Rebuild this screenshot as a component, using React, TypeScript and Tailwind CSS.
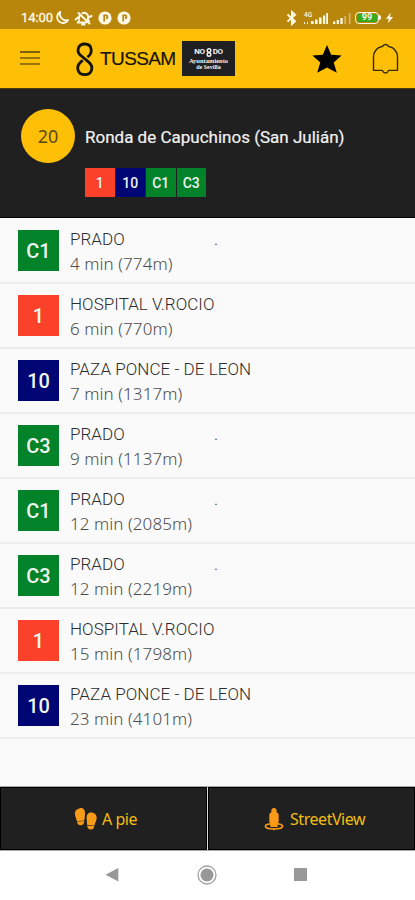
import React from 'react';

type Line = '1' | '10' | 'C1' | 'C3';

interface Arrival {
  line: Line;
  destination: string;
  time: string;
  distance: string;
}

const LINE_COLORS: Record<Line, string> = {
  '1': 'bg-[#fb4129]',
  '10': 'bg-[#000574]',
  C1: 'bg-[#038329]',
  C3: 'bg-[#038329]',
};

const STOP_LINES: Line[] = ['1', '10', 'C1', 'C3'];

const ARRIVALS: Arrival[] = [
  { line: 'C1', destination: 'PRADO', time: '4 min', distance: '774m' },
  { line: '1', destination: 'HOSPITAL V.ROCIO', time: '6 min', distance: '770m' },
  { line: '10', destination: 'PAZA PONCE - DE LEON', time: '7 min', distance: '1317m' },
  { line: 'C3', destination: 'PRADO', time: '9 min', distance: '1137m' },
  { line: 'C1', destination: 'PRADO', time: '12 min', distance: '2085m' },
  { line: 'C3', destination: 'PRADO', time: '12 min', distance: '2219m' },
  { line: '1', destination: 'HOSPITAL V.ROCIO', time: '15 min', distance: '1798m' },
  { line: '10', destination: 'PAZA PONCE - DE LEON', time: '23 min', distance: '4101m' },
];

const ParkingIcon = () => (
  <svg width="14" height="14" viewBox="0 0 14 14">
    <circle cx="7" cy="7" r="6.6" fill="#fff8e6" />
    <path d="M6.2 10.6V4.4H8a1.5 1.5 0 0 1 0 3" fill="none" stroke="#b8860b" strokeWidth="1.7" />
  </svg>
);

const StatusBar = () => (
  <div className="h-[29px] shrink-0 bg-[#b8860b] flex items-center pt-[6px] pl-[21px] pr-[21px] text-[#fff8e6]">
    <span className="w-[34px] text-[13px] leading-none tracking-[-0.1px] whitespace-nowrap [-webkit-text-stroke:0.3px_#fff8e6]">14:00</span>
    <svg width="15" height="15" viewBox="0 0 16 16">
      <path d="M5.6 2A6.3 6.3 0 1 0 14 10.7 6.8 6.8 0 0 1 5.6 2Z" fill="none" stroke="currentColor" strokeWidth="2" strokeLinejoin="round" />
    </svg>
    {/* Muted bell */}
    <svg className="ml-[4px]" width="19" height="16" viewBox="0 0 19 16" fill="none" stroke="currentColor" strokeWidth="2" strokeLinecap="round">
      <path d="M5 10.5 4 12.5H12M8.500 3.200C11 2.200 14 3.500 14 6.500V9.500L15 11.500M8 14.500h2.500M4.500 3l11 10.500M1.500 9.500 4 7.500M17.500 6 15.500 7M5 8.500C4.800 7 5 6 6 5" />
    </svg>
    <div className="ml-[5px] flex gap-[5px]">
      <ParkingIcon />
      <ParkingIcon />
    </div>

    <div className="ml-auto flex items-center">
      <svg width="12" height="16" viewBox="0 0 12 16" fill="none" stroke="currentColor" strokeWidth="2">
        <path d="m1.5 4.5 7.500 6.800L6 14V2l3 2.700-7.500 6.800" />
      </svg>
      <svg className="ml-[5px]" width="49" height="16" viewBox="0 0 49 16" fill="currentColor">
        <text x="1" y="6.5" fontSize="6.5" fontFamily="Roboto, sans-serif" fontWeight="500">4G</text>
        <path d="M1 12h1v2H1zM4 12h1v2H4zM8 11h2.600v3H8zM12 9.500h2.600V14H12zM16 7.500h2.600V14H16zM20 5.500h2.200V14H20zM23.200 3h1.800v11h-1.800zM30 11.500h2.300V14H30zM33.700 10h2.300v4h-2.300zM37.400 8h2.300v6h-2.300z" />
        <path d="M41.300 6h1.800v8h-1.800zM45.800 3h1.800v11h-1.800z" opacity=".4" />
      </svg>
      <div className="ml-[3px] flex h-[12px] w-[24px] items-center justify-center rounded-[4px] border-[1.5px] border-[#fff8e6] p-px">
        <span className="flex h-full w-full items-center justify-center rounded-[2px] bg-[#39a81d] text-[9px] leading-none font-bold">99</span>
      </div>
      <span className="h-[5px] w-[2px] rounded-r bg-[#fff8e6]" />
      <svg className="ml-[4px]" width="9" height="12" viewBox="0 0 9 12">
        <path d="M5.800.800.800 6.800h3L2.800 11.200 8.200 5H5Z" fill="currentColor" />
      </svg>
    </div>
  </div>
);

const AppBar = () => (
  <header className="h-[60px] shrink-0 bg-[#fec007] flex items-center pl-[20px] pr-[16px] border-b border-[#4b3a0a]">
    <div className="flex w-[20px] -mt-[2px] flex-col gap-[4px]">
      <span className="h-[2px] bg-[#7f600a]" />
      <span className="h-[2px] bg-[#9a750b]" />
      <span className="h-[2px] bg-[#9a750b]" />
    </div>

    {/* Logo */}
    <svg className="ml-[35px]" width="20" height="38" viewBox="0 0 20 38" fill="none" stroke="#15140c" strokeWidth="2.8">
      <path d="M12.4 17.2C18 13.5 17.700 4 9.800 4 2 4 1.600 12.200 5.600 15.300L14 22.400C18.800 26.700 17.300 34.700 9.800 34.700 2.300 34.700.800 26.700 5.300 22.400L7.800 20.300" />
    </svg>
    <span className="ml-[5px] w-[76px] whitespace-nowrap font-['Liberation_Sans'] text-[19px] leading-none tracking-[-0.6px] text-[#15140c] [-webkit-text-stroke:0.2px_#15140c]">
      TUSSAM
    </span>
    <div className="ml-[6px] flex h-[35px] w-[53px] flex-col items-center justify-center bg-[#202022] text-[#f2f2f2]">
      <div className="flex h-[9px] items-center text-[8px] leading-none tracking-[-0.4px] font-bold">
        <span>N</span>
        <span>O</span>
        <svg width="8" height="9" viewBox="0 0 8 9" fill="none" stroke="currentColor" strokeWidth="1.4">
          <circle cx="4" cy="2.500" r="1.800" />
          <circle cx="4" cy="6.500" r="1.800" />
        </svg>
        <span>D</span>
        <span>O</span>
      </div>
      <span className="mt-px whitespace-nowrap font-['Liberation_Serif'] text-[6.5px] leading-[6px] font-bold">Ayuntamiento</span>
      <span className="whitespace-nowrap font-['Liberation_Serif'] text-[6px] leading-[6px] font-bold">de Sevilla</span>
    </div>

    <svg className="ml-auto" width="30" height="30" viewBox="0 0 30 30" fill="#000">
      <path d="M15 1 19.200 10.800 29.600 11.500 21.700 18.500 24.800 28.800 15 23.400 5.200 28.800 8.300 18.500.4 11.500 10.800 10.800Z" />
    </svg>
    <svg className="ml-[30px]" width="27" height="32" viewBox="0 0 27 32" fill="none" stroke="#352b0a" strokeWidth="1.4" strokeLinejoin="round">
      <path d="M1.500 27.400V14.500C1.500 8 5.500 4.200 10.800 3.200 11.300 2 12.200 1.500 13.500 1.500S15.700 2 16.200 3.200C21.500 4.200 25.500 8 25.500 14.500V27.400H16.600C15.800 29.300 14.900 30 13.500 30S11.200 29.300 10.400 27.400Z" />
    </svg>
  </header>
);

const StopHeader = () => (
  <section className="flex h-[129px] shrink-0 bg-[#202020] pl-[21px] pt-[20px] border-b border-black">
    <div className="flex h-[54px] w-[54px] items-center justify-center rounded-full bg-[#fec007] font-['Noto_Sans'] text-[18px] text-[#5c4a14]">
      20
    </div>
    <div className="ml-[10px] pt-[17px]">
      <h1 className="whitespace-nowrap text-[17px] leading-[22px] text-[#f1f1f1] [-webkit-text-stroke:0.2px_#f1f1f1]">Ronda de Capuchinos (San Julián)</h1>
      <div className="mt-[20px] flex gap-px">
        {STOP_LINES.map((line) => (
          <span
            key={line}
            className={`flex h-[29px] w-[29.5px] items-center justify-center pt-px text-[14px] font-medium text-[#eef2f2] ${LINE_COLORS[line]}`}
          >
            {line}
          </span>
        ))}
      </div>
    </div>
  </section>
);

const ArrivalRow: React.FC<{ arrival: Arrival }> = ({ arrival }) => (
  <li className="flex h-[65px] items-start border-b-2 border-[#ececec] pl-[18px] pt-[11px]">
    <span
      className={`flex h-[41px] w-[41px] items-center justify-center text-[20px] font-medium text-[#eef4ee] ${LINE_COLORS[arrival.line]}`}
    >
      {arrival.line}
    </span>
    <div className="ml-[11px] -mt-[3px]">
      <div className="flex h-[25px] items-center whitespace-nowrap text-[17px] tracking-[0.05px] font-light text-[#2c2c2c]">
        <span className={arrival.destination === 'PRADO' ? 'w-[144px]' : ''}>{arrival.destination}</span>
        {arrival.destination === 'PRADO' && <span>.</span>}
      </div>
      <div className="flex h-[24px] items-center whitespace-nowrap font-['Noto_Sans'] text-[17px] tracking-[0.07px] font-light text-[#4c4c4c]">
        {arrival.time} ({arrival.distance})
      </div>
    </div>
  </li>
);

const Actions = () => (
  <div className="grid h-[65px] shrink-0 grid-cols-2 gap-px border-y border-[#a8a8a8] bg-[#dddddd] font-['Noto_Sans'] text-[16px] tracking-[-0.45px] text-[#f0bd16]">
    <button className="flex items-center border border-black bg-[#202020] pl-[73px]">
      <svg width="24" height="24" viewBox="0 0 24 24" fill="#f99b18">
        <path d="M6 1.200C9.500.500 11.300 3.400 11 7.500L10.300 13.500 2.900 14.200C2.600 11.700.900 9.400.900 6.400.900 3.600 2.800 1.700 6 1.200ZM3 14.800l7.200-.7c-.1 2.800-1.100 4.100-3.400 4.200S3.300 17.100 3 14.800ZM17.700 5.500C14.300 5 12.300 7.600 12.700 11.700l.4 6.100 7.300.9c.4-2.500 2.200-4.700 2.300-7.600.1-3.100-1.900-5.200-5-5.600ZM13.200 18.500l7.100.8c-.4 2.400-1.500 3.500-3.700 3.300s-3.400-1.900-3.400-4.100Z" />
      </svg>
      <span className="ml-[4px] whitespace-nowrap">A pie</span>
    </button>
    <button className="flex items-center border border-black bg-[#202020] pl-[55px]">
      <svg width="20" height="24" viewBox="0 0 20 24">
        <ellipse cx="10" cy="19.200" rx="8.700" ry="2.800" fill="none" stroke="#f99b18" strokeWidth="1.500" />
        <path d="M10 1a2.800 2.800 0 0 1 2.400 4.200c1.700.4 2.300 1.600 2.300 3.300V15l-1 1v4H6.300v-4l-1-1V8.500c0-1.700.6-2.900 2.300-3.300A2.800 2.800 0 0 1 10 1Z" fill="#f99b18" />
        <path d="M10 21v2.200" stroke="#f99b18" strokeWidth="1.500" />
      </svg>
      <span className="ml-[6px] whitespace-nowrap">StreetView</span>
    </button>
  </div>
);

const SystemNav = () => (
  <nav className="flex h-[49px] shrink-0 items-center bg-white pb-[2px] pl-[105px]">
    <svg width="14" height="16" viewBox="0 0 14 16" fill="#989898">
      <path d="M13.300 1v13.500L.5 7.700Z" />
    </svg>
    <svg className="ml-[77px]" width="22" height="22" viewBox="0 0 22 22">
      <circle cx="11" cy="11" r="9" fill="none" stroke="#a0a0a0" strokeWidth="1.300" />
      <circle cx="11" cy="11" r="6.500" fill="#989898" />
    </svg>
    <span className="ml-[76px] h-[13px] w-[13px] bg-[#999999]" />
  </nav>
);

export default function App() {
  return (
    <div className="flex h-[900px] w-[415px] flex-col overflow-hidden bg-[#fafafa] font-['Roboto',sans-serif]">
      <StatusBar />
      <AppBar />
      <StopHeader />
      <ul className="flex-1 pt-px">
        {ARRIVALS.map((arrival, index) => (
          <ArrivalRow key={index} arrival={arrival} />
        ))}
      </ul>
      <Actions />
      <SystemNav />
    </div>
  );
}
